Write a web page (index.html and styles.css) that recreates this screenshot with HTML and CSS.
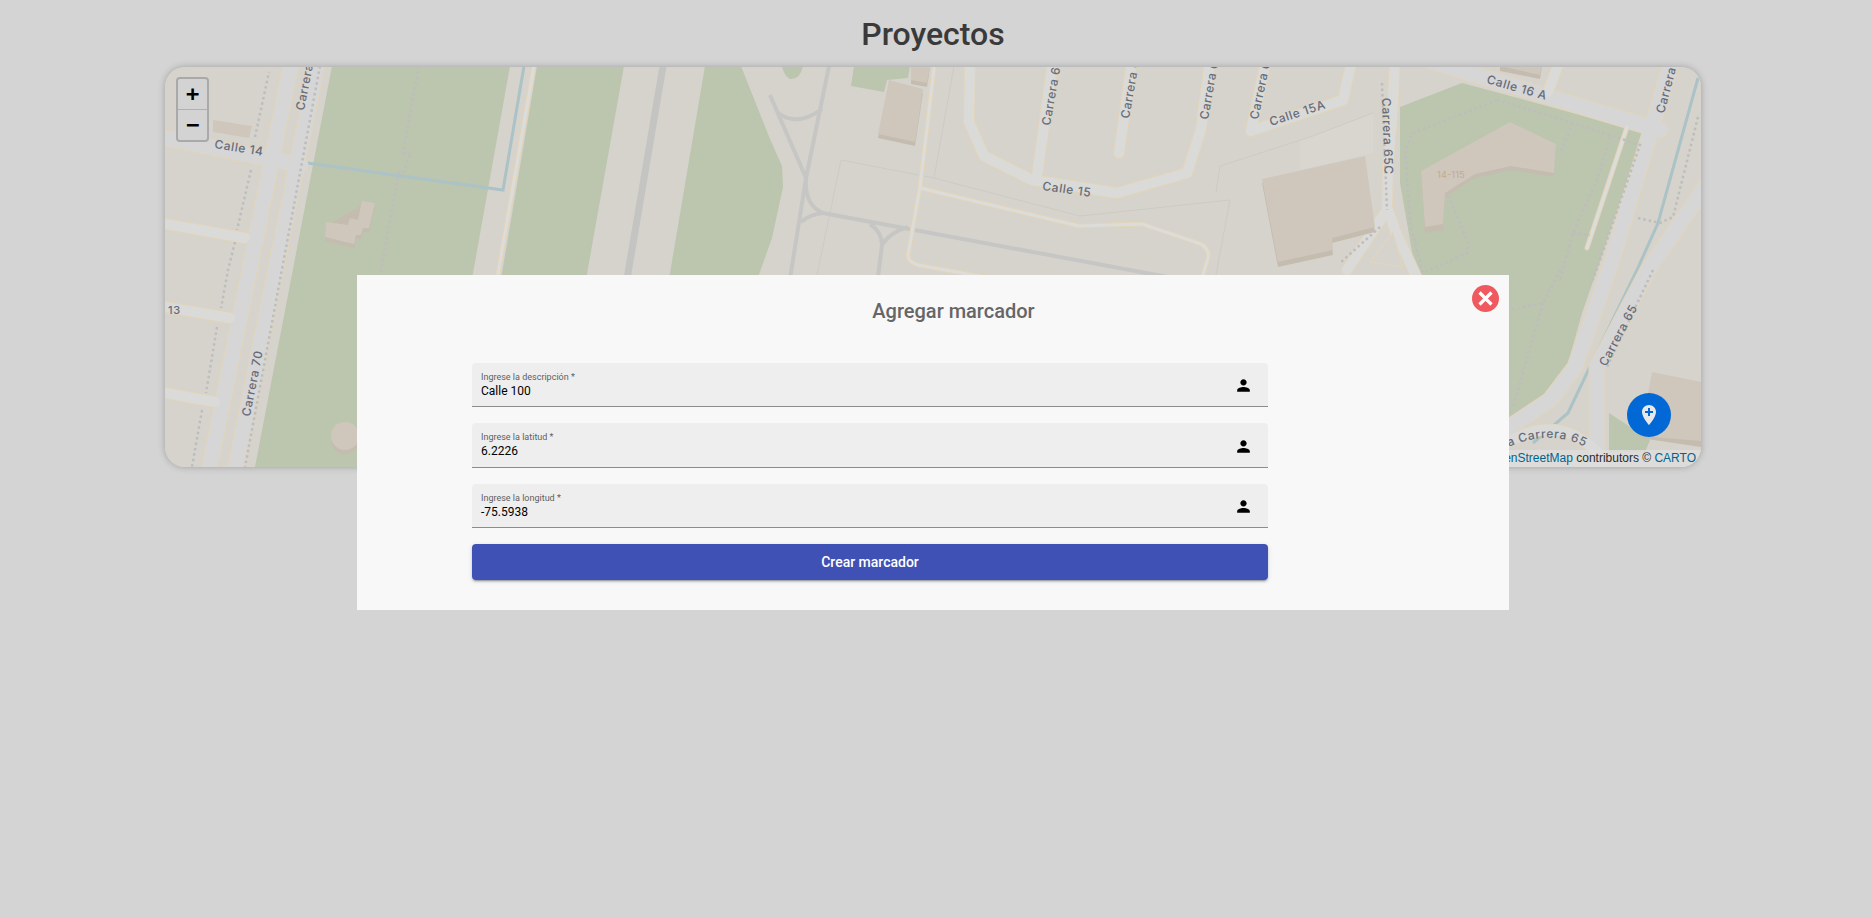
FILE: index.html
```html
<!DOCTYPE html>
<html lang="es">
<head>
    <meta charset="UTF-8">
    <meta name="viewport" content="width=device-width, initial-scale=1.0">
    <title>Proyectos</title>
    <link rel="stylesheet" href="styles.css">
</head>
<body>
    <div class="page">
        <h1 class="page-title">Proyectos</h1>

        <div class="map">
            <!-- viewBox uses page coordinates so the map lines up with the reference -->
            <svg class="map-canvas" viewBox="165 67 1536 400" width="1536" height="400">
                <defs>
                    <g id="roads-wide">
                        <path d="M165 138L300 165"/>
                        <path d="M318 60L235 470"/>
                        <path d="M292 60L209 470"/>
                        <path d="M1433 62L1660 130"/>
                        <path d="M1672 60L1609 270L1575 367L1550 400L1505 430"/>
                        <path d="M1710 180L1648 270L1597 367L1597 470"/>
                    </g>
                    <g id="roads-mid">
                        <path d="M165 224L245 238"/>
                        <path d="M165 307L230 318"/>
                        <path d="M165 393L215 402"/>
                        <path d="M970 60L969 122L984 156L1032 180L1117 193L1187 173L1201 129L1210 60"/>
                        <path d="M1053 60L1037 176"/>
                        <path d="M1132 60L1119 153"/>
                        <path d="M1266 60L1251 131L1343 100L1352 60"/>
                        <path d="M1395 60L1392 117L1388 167L1387 207L1395 230L1420 285"/>
                        <path d="M1387 210L1347 270"/>
                        <path d="M1560 60L1548 92"/>
                        <path d="M1500 447Q1555 410 1597 452"/>
                    </g>
                    <g id="roads-thin">
                        <path d="M535 60L496 285"/>
                        <path d="M935 60L920 187L908 255Q908 262 918 265L1011 282"/>
                        <path d="M920 188L1079 226L1142 224L1201 244Q1210 250 1208 258L1201 282"/>
                        <path d="M1627 127L1587 248"/>
                    </g>
                    <path id="glorieta" d="M1462 478Q1550 402 1615 470"/>
                </defs>

                <rect class="land" x="165" y="67" width="1536" height="400"/>

                <!-- parcels -->
                <path class="plaza" d="M1300 140L1373 113L1373 153L1300 170Z"/>
                <path class="parcel" d="M816 280L841 160L934 178L1080 216L1230 200L1215 280M934 178L954 66M1216 192L1220 166L1310 137L1373 113"/>

                <!-- green areas -->
                <path class="green" d="M332 66L510 66L470 290L357 470L255 467Z"/>
                <path class="green" d="M537 66L624 66L585 285L500 285Z"/>
                <path class="green" d="M705 66L741 66L770 139L782 166L783 187L772 238L757 280L668 285Z"/>
                <path class="green" d="M854 66L851 86L884 92L887 80L908 78L910 66Z"/>
                <path class="green" d="M782 66L803 66Q800 80 790 79Q784 76 782 66Z"/>
                <path class="green" d="M1400 107L1462 83L1643 132L1597 270L1582 313L1567 367L1547 400L1500 440L1400 400L1417 280L1400 183Z"/>
                <path class="green" d="M1609 413L1650 440L1645 452L1609 452Z"/>

                <!-- runway and taxiways -->
                <path class="runway" d="M663 66L626 285"/>
                <path class="taxi" d="M770 95L806 178M829 66L806 178L789 285M777 112Q796 128 822 109M806 178Q804 205 823 213L1173 278M801 222Q808 215 823 213M870 224Q882 232 882 245L877 285M882 245Q890 232 908 227"/>

                <!-- water -->
                <path class="water" d="M524 66L503 190L300 162"/>
                <path class="water" d="M1698 78L1658 223L1637 270L1587 373L1568 413L1533 443"/>

                <!-- roads -->
                <use href="#roads-wide" class="casing casing-wide"/>
                <use href="#roads-mid" class="casing casing-mid"/>
                <use href="#roads-thin" class="casing casing-thin"/>
                <use href="#roads-wide" class="road road-wide"/>
                <use href="#roads-mid" class="road road-mid"/>
                <use href="#roads-thin" class="road road-thin"/>

                <!-- footpaths -->
                <path class="path" d="M320 66L245 467"/>
                <path class="path" d="M255 137L269 72M251 170L237 230M235 242L228 270L221 308M217 327L206 393M202 410L192 467"/>
                <path class="path" d="M419 66L403 153L411 153L403 172L399 172L379 280"/>
                <path class="path" d="M1497 100L1573 123L1640 145L1593 280M1497 100L1413 133L1405 150L1410 223L1423 273L1467 253L1468 243L1447 193"/>
                <path class="path" d="M1573 123L1560 153M1610 137L1597 180L1573 233L1560 280M1573 233L1590 235"/>
                <path class="path" d="M1382 83L1387 210M1380 227L1340 263M1560 270L1543 303L1510 310M1543 303L1513 407"/>
                <path class="path" d="M1698 117L1673 217L1660 223L1638 218M1653 270L1607 367"/>

                <!-- island -->
                <path class="island" d="M1393 232L1403 267L1370 262Z"/>

                <!-- buildings, shadow first -->
                <g class="shadow">
                    <path d="M362 205L375 207L369 232L363 232L361 239L356 239L354 248L325 241L326 226Z"/>
                    <circle cx="345" cy="440" r="14"/>
                    <path d="M889 84L923 93L915 146L878 138Z"/>
                    <path d="M911 68L930 68L927 87L911 84Z"/>
                    <path d="M1262 183L1365 160L1375 232L1332 243L1333 255L1278 267Z"/>
                    <path d="M1510 126L1556 148L1554 177L1511 170L1475 178L1445 197L1443 230L1425 233L1421 175Z"/>
                    <path d="M1652 376L1701 386L1701 447L1640 438Z"/>
                    <path d="M1500 66L1542 66L1540 79L1500 71Z"/>
                </g>
                <g class="building">
                    <path d="M362 201L375 203L369 228L363 228L361 235L356 235L354 244L325 237L326 222L348 225L350 218L358 220Z"/>
                    <path d="M213 120L252 126L249 138L213 132Z"/>
                    <circle cx="345" cy="436" r="14"/>
                    <path d="M889 80L923 89L915 142L878 134Z"/>
                    <path d="M911 66L930 66L927 83L911 80Z"/>
                    <path d="M1262 179L1365 156L1375 227L1332 238L1333 250L1278 262Z"/>
                    <path d="M1510 122L1556 144L1554 173L1511 166L1475 174L1445 193L1443 224L1425 227L1421 171Z"/>
                    <path d="M1652 372L1701 382L1701 441L1640 436Z"/>
                    <path d="M1500 62L1542 62L1540 75L1500 66Z"/>
                </g>

                <!-- labels -->
                <g class="labels">
                    <text x="214" y="148" transform="rotate(9 214 148)">Calle 14</text>
                    <text x="304" y="111" transform="rotate(-79 304 111)">Carrera 70</text>
                    <text x="168" y="314" class="label-small">13</text>
                    <text x="250" y="417" transform="rotate(-79 250 417)">Carrera 70</text>
                    <text x="1042" y="190" transform="rotate(8 1042 190)">Calle 15</text>
                    <text x="1050" y="126" transform="rotate(-80 1050 126)">Carrera 66</text>
                    <text x="1129" y="119" transform="rotate(-80 1129 119)">Carrera 66</text>
                    <text x="1208" y="120" transform="rotate(-80 1208 120)">Carrera 66</text>
                    <text x="1258" y="120" transform="rotate(-78 1258 120)">Carrera 66</text>
                    <text x="1271" y="126" transform="rotate(-18 1271 126)">Calle 15A</text>
                    <text x="1382" y="98" transform="rotate(88 1382 98)">Carrera 65C</text>
                    <text x="1486" y="83" transform="rotate(16 1486 83)">Calle 16 A</text>
                    <text x="1664" y="114" transform="rotate(-75 1664 114)">Carrera 65</text>
                    <text x="1606" y="367" transform="rotate(-62 1606 367)">Carrera 65</text>
                    <text><textPath href="#glorieta" startOffset="14">Glorieta Carrera 65</textPath></text>
                </g>
                <text x="1437" y="178" class="label-house">14-115</text>
            </svg>

            <div class="zoom-control">
                <div class="zoom-btn zoom-in">+</div>
                <div class="zoom-btn">−</div>
            </div>

            <div class="attribution">© <a>OpenStreetMap</a> contributors © <a>CARTO</a></div>

            <button class="fab" type="button" aria-label="Agregar marcador">
                <svg viewBox="0 0 24 24" width="24" height="24"><path d="M12 2C8.14 2 5 5.14 5 9c0 5.25 7 13 7 13s7-7.75 7-13c0-3.86-3.14-7-7-7zm4 8h-3v3h-2v-3H8V8h3V5h2v3h3v2z"/></svg>
            </button>
        </div>
    </div>

    <div class="modal">
        <button class="modal-close" type="button" aria-label="Cerrar">
            <svg viewBox="0 0 27 27" width="27" height="27"><path d="M7.5 7.5L19.5 19.5M19.5 7.5L7.5 19.5"/></svg>
        </button>

        <h2 class="modal-title">Agregar marcador</h2>

        <form class="marker-form">
            <div class="field">
                <div class="field-text">
                    <span class="field-label">Ingrese la descripción *</span>
                    <span class="field-value">Calle 100</span>
                </div>
                <svg class="field-icon" viewBox="0 0 24 24" width="19" height="19"><path d="M12 12c2.21 0 4-1.79 4-4s-1.79-4-4-4-4 1.79-4 4 1.79 4 4 4zm0 2c-2.67 0-8 1.34-8 4v2h16v-2c0-2.66-5.33-4-8-4z"/></svg>
            </div>
            <div class="field">
                <div class="field-text">
                    <span class="field-label">Ingrese la latitud *</span>
                    <span class="field-value">6.2226</span>
                </div>
                <svg class="field-icon" viewBox="0 0 24 24" width="19" height="19"><path d="M12 12c2.21 0 4-1.79 4-4s-1.79-4-4-4-4 1.79-4 4 1.79 4 4 4zm0 2c-2.67 0-8 1.34-8 4v2h16v-2c0-2.66-5.33-4-8-4z"/></svg>
            </div>
            <div class="field">
                <div class="field-text">
                    <span class="field-label">Ingrese la longitud *</span>
                    <span class="field-value">-75.5938</span>
                </div>
                <svg class="field-icon" viewBox="0 0 24 24" width="19" height="19"><path d="M12 12c2.21 0 4-1.79 4-4s-1.79-4-4-4-4 1.79-4 4 1.79 4 4 4zm0 2c-2.67 0-8 1.34-8 4v2h16v-2c0-2.66-5.33-4-8-4z"/></svg>
            </div>
            <button class="submit-btn" type="button">Crear marcador</button>
        </form>
    </div>
</body>
</html>
```

FILE: styles.css
```css
body {
    margin: 0;
    min-height: 918px;
    background: #d4d4d4;
    font-family: Roboto, "Liberation Sans", sans-serif;
}

.page {
    padding: 15px 6px 0 0;
}

.page-title {
    margin: 0 0 14px;
    height: 38px;
    line-height: 38px;
    font-size: 32px;
    font-weight: 500;
    color: #3a3a3a;
    text-align: center;
}

.map {
    position: relative;
    width: 1536px;
    height: 400px;
    margin: 0 auto;
    border-radius: 20px;
    overflow: hidden;
    box-shadow: 0 0 7px rgba(0, 0, 0, 0.25);
}

.map-canvas {
    display: block;
}

/* map drawing */
.land { fill: #d6d3cd; }
.plaza { fill: #d9d6d0; }
.parcel { fill: none; stroke: #cdcac4; stroke-width: 1; }
.green { fill: #bcc5ae; }
.runway { fill: none; stroke: #c4c4c2; stroke-width: 7; }
.taxi { fill: none; stroke: #c6c6c5; stroke-width: 4; }
.water { fill: none; stroke: #abc2c6; stroke-width: 3; }
.island { fill: #d6d3cd; stroke: #e3d6bd; stroke-width: 1; }
.shadow { fill: #c5bcb0; }
.building { fill: #cfc7bc; }

.path {
    fill: none;
    stroke: #bdbdbd;
    stroke-width: 2.5;
    stroke-dasharray: 2.5 3;
}

.casing, .road {
    fill: none;
    stroke-linecap: round;
    stroke-linejoin: round;
}

.casing { stroke: #e2d4b8; }
.road { stroke: #d6d6d6; }
.casing-wide { stroke-width: 17px; }
.road-wide { stroke-width: 15px; }
.casing-mid { stroke-width: 12px; }
.road-mid { stroke-width: 10px; stroke: #dadad9; }
.casing-thin { stroke-width: 5px; }
.road-thin { stroke-width: 3px; stroke: #dcdcda; }

.labels text {
    font-family: Inter, "Open Sans", sans-serif;
    font-size: 12px;
    font-weight: 500;
    letter-spacing: 0.6px;
    fill: #666c78;
}

.labels .label-small {
    font-size: 11px;
}

.label-house {
    font-family: Inter, "Open Sans", sans-serif;
    font-size: 9.5px;
    fill: #c4ab8b;
}

.zoom-control {
    position: absolute;
    top: 10px;
    left: 11px;
    width: 29px;
    border: 2px solid #a9a9a9;
    border-radius: 4px;
    background: #d3d3d3;
}

.zoom-btn {
    height: 30px;
    line-height: 30px;
    font-family: "DejaVu Sans Mono", monospace;
    font-size: 22px;
    font-weight: bold;
    color: #000;
    text-align: center;
}

.zoom-in {
    border-bottom: 1px solid #b0b0b0;
}

.attribution {
    position: absolute;
    right: 0;
    bottom: 0;
    height: 17px;
    line-height: 17px;
    padding: 0 5px;
    background: rgba(222, 222, 222, 0.8);
    font-family: "Liberation Sans", Arial, sans-serif;
    font-size: 12px;
    color: #2b2b2b;
}

.attribution a {
    color: #00648c;
}

.fab {
    position: absolute;
    right: 30px;
    bottom: 30px;
    display: flex;
    align-items: center;
    justify-content: center;
    width: 44px;
    height: 44px;
    padding: 0;
    border: none;
    border-radius: 50%;
    background: #0268d6;
}

.fab svg {
    fill: #e9e9e9;
}

/* modal */
.modal {
    position: absolute;
    top: 275px;
    left: 357px;
    width: 1152px;
    height: 335px;
    background: #f8f8f8;
}

.modal-close {
    position: absolute;
    top: 10px;
    right: 10px;
    width: 27px;
    height: 27px;
    padding: 0;
    border: none;
    border-radius: 50%;
    background: #ee5a5f;
}

.modal-close svg {
    display: block;
    fill: none;
    stroke: #fff;
    stroke-width: 3.2;
}

.modal-title {
    margin: 0;
    padding: 25px 0 0 41px;
    line-height: 23px;
    font-size: 20px;
    font-weight: 500;
    color: #666;
    text-align: center;
}

.marker-form {
    display: flex;
    flex-direction: column;
    gap: 16px;
    width: 796px;
    margin: 39.75px 0 0 115px;
}

.field {
    display: flex;
    align-items: center;
    justify-content: space-between;
    box-sizing: border-box;
    height: 44.5px;
    padding: 0 15px 0 9px;
    background: #eee;
    border-bottom: 1px solid #8c8c8c;
    border-radius: 4px 4px 0 0;
}

.field-text {
    display: flex;
    flex-direction: column;
}

.field-label {
    line-height: 11px;
    font-size: 9px;
    color: #5f5f5f;
}

.field-value {
    margin-top: 1px;
    line-height: 14px;
    font-size: 12px;
    color: #000;
}

.field-icon {
    margin-top: 2px;
    fill: #000;
}

.submit-btn {
    height: 36px;
    padding: 0;
    border: none;
    border-radius: 4px;
    background: #3f51b5;
    box-shadow: 0 3px 1px -2px rgba(0, 0, 0, 0.2), 0 2px 2px 0 rgba(0, 0, 0, 0.14), 0 1px 5px 0 rgba(0, 0, 0, 0.12);
    font-family: Roboto, "Liberation Sans", sans-serif;
    font-size: 14px;
    font-weight: 500;
    color: #fff;
}
```
